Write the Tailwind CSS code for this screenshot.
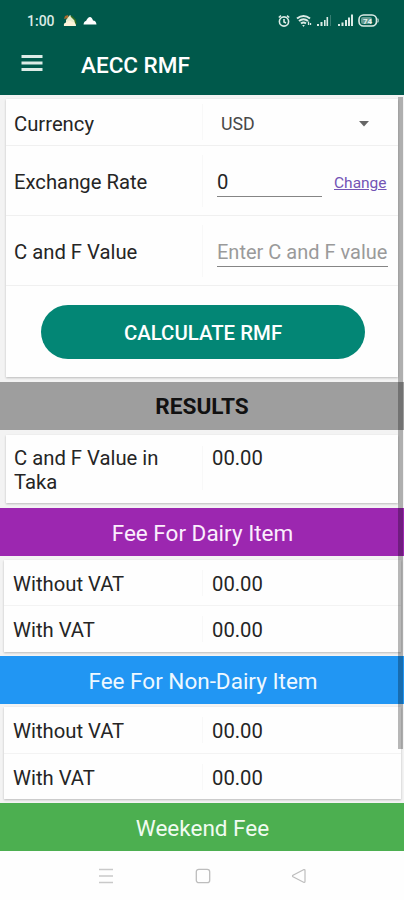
<!DOCTYPE html>
<html lang="en">
<head>
<meta charset="utf-8">
<title>AECC RMF</title>
<script src="https://cdn.jsdelivr.net/npm/@tailwindcss/browser@4"></script>
</head>
<body class="w-[404px] h-[900px] overflow-hidden bg-[#f3f3f3] font-[Roboto,sans-serif] text-[#252525] text-[20.250px] leading-[24px] whitespace-nowrap">
<div class="relative w-[404px] h-[900px] flex flex-col overflow-hidden">
  <header class="h-[95px] shrink-0 bg-[#00594b] text-white">
    <div class="h-[41px] flex items-center pl-[27px] pr-[25px] text-[#dcebe6]">
      <span class="text-[14px] font-medium w-[36px]">1:00</span>
      <svg class="w-[14px] h-[14px]" viewBox="0 0 14 14"><path d="M1 5L2 2L5 1L6 4Z" fill="#a66a2d"/><path d="M7 1L12 6V12H3V6Z" fill="#e8edce"/><path d="M8 2L12 6L13 10" stroke="#376d20" stroke-width="1.5" fill="none"/><path d="M1 12Q0 9 4 8Q7 5 9 8Q13 8 13 12Z" fill="#fff4da"/></svg>
      <svg class="w-[14px] h-[10px] ml-[6px]" viewBox="0 0 14 10"><path d="M.5 8.500Q1 5 3 5Q5 1 7 1Q9 1 10 4.500Q13 4.500 13.500 8.500Z" fill="#fff"/></svg>
      <div class="ml-auto flex items-center">
        <svg class="w-[12px] h-[14px]" viewBox="0 0 12 14" fill="none" stroke="currentColor" stroke-width="1.600"><circle cx="6" cy="7.500" r="4.600"/><path d="M.8 3.500L3 1.700M11.200 3.500L9 1.700M6 5V8L8 9"/></svg>
        <svg class="w-[16px] h-[14px] ml-[6px]" viewBox="0 0 16 14" fill="none" stroke="currentColor" stroke-width="2.100"><path d="M1 4.500Q7.500-.5 14 4.500M3 7Q7.500 3.500 12 7M5 9.500Q7.500 7.500 10 9.500"/><path d="M6.200 11H8.800L7.500 13Z" fill="currentColor" stroke="none"/><path d="M12.500 7.500V11M14.500 9V11" stroke-width="1.300"/></svg>
        <svg class="w-[15px] h-[13px] ml-[4px]" viewBox="0 0 15 13" fill="currentColor"><path d="M1 10h2v2H1zM4.500 8h2v4h-2zM8 6h1.600v6H8zM10.500 3h1.600v9h-1.600z"/><path d="M14 1h1v11h-1z" opacity=".25"/></svg>
        <svg class="w-[17px] h-[13px] ml-[6px]" viewBox="0 0 17 13" fill="currentColor"><path d="M1 10h2v2H1zM4.500 8.500h2V12h-2zM8 6h2v6H8zM11 3.500h2V12h-2zM14 .5h2V12h-2z"/></svg>
        <svg class="w-[21px] h-[13px] ml-[4px]" viewBox="0 0 21 13"><rect x="1" y="1" width="17.500" height="11" rx="4.500" fill="none" stroke="currentColor" stroke-width="1.600"/><rect x="3" y="3" width="11" height="7" rx="2" fill="currentColor" opacity=".45"/><path d="M19.800 4.500q1 2 0 4" stroke="currentColor" fill="none"/><text x="5" y="9.500" font-size="8" font-weight="700" fill="#e8f3ef">74</text></svg>
      </div>
    </div>
    <div class="h-[48px] flex items-center pl-[21px]">
      <svg class="w-[22px] h-[18px] -mt-[4px]" viewBox="0 0 22 18" fill="#dcebe6"><path d="M.5 1h21v3H.5zM.5 7.500h21v3H.5zM.5 14h21v3H.5z"/></svg>
      <h1 class="ml-[38px] -mt-px text-[22.500px] font-medium">AECC RMF</h1>
    </div>
  </header>

  <main class="flex flex-col shrink-0 h-[756px]">
    <section class="mt-[4px] ml-[6px] w-[392px] h-[278px] shrink-0 bg-[#fefefe] shadow-[0_1px_2px_#bbb]">
      <div class="h-[47px] flex items-center border-b border-[#f0f0f0] pl-[8px] pb-[1px] mr-0">
        <span class="w-[188px] mt-[4px]">Currency</span>
        <div class="h-[36px] border-l border-[#f8f8f8]"></div>
        <span class="ml-[18px] mt-[4px] text-[17.800px] text-[#484848]">USD</span>
        <svg class="ml-auto mr-[29px] mt-[4px] w-[10px] h-[6px]" viewBox="0 0 10 6"><path d="M0 0H10L5 5.500Z" fill="#666"/></svg>
      </div>
      <div class="h-[70px] flex items-center border-b border-[#f0f0f0] pl-[8px]">
        <span class="w-[188px] mt-[2px]">Exchange Rate</span>
        <div class="h-[52px] border-l border-[#f8f8f8]"></div>
        <span class="ml-[14px] w-[105px] h-[27px] mt-[5px] border-b border-[#858585]">0</span>
        <a class="ml-[12px] mt-[5px] text-[15.500px] text-[#7354b5] underline">Change</a>
      </div>
      <div class="h-[70px] flex items-center border-b border-[#f0f0f0] pl-[8px]">
        <span class="w-[188px] mt-[2px]">C and F Value</span>
        <div class="h-[52px] border-l border-[#f8f8f8]"></div>
        <span class="ml-[14px] w-[171px] h-[27px] mt-[5px] border-b border-[#858585] text-[20px] text-[#9a9a9a]">Enter C and F value</span>
      </div>
      <button class="mt-[19px] ml-[35px] block w-[324px] h-[54px] rounded-full bg-[#038675] text-white text-[20.400px] font-medium pt-[2px]">CALCULATE RMF</button>
    </section>

    <h2 class="mt-[5px] h-[48px] shrink-0 bg-[#9e9e9e] flex items-center justify-center text-[22.600px] font-bold text-[#111] pt-[2px]">RESULTS</h2>
    <section class="mt-[5px] ml-[6px] w-[392px] h-[68px] shrink-0 bg-[#fefefe] shadow-[0_1px_2px_#bbb] flex pt-[11px] pl-[8px]">
      <span class="w-[188px]">C and F Value in<br>Taka</span>
      <div class="h-[44px] border-l border-[#f8f8f8]"></div>
      <span class="ml-[9px]">00.00</span>
    </section>

    <h2 class="mt-[5px] h-[48px] shrink-0 bg-[#9c27b0] flex items-center justify-center text-[22.500px] text-[#fbeefd] pt-[2px] pl-px">Fee For Dairy Item</h2>
    <section class="mt-[4px] ml-[4px] w-[397px] h-[92px] shrink-0 bg-[#fefefe] shadow-[0_1px_2px_#bbb]">
      <div class="h-[46px] flex items-center border-b border-[#f3f3f3] pl-[9px]"><span class="w-[189px] mt-[2px]">Without VAT</span><div class="h-[26px] border-l border-[#f8f8f8]"></div><span class="ml-[9px] mt-[2px]">00.00</span></div>
      <div class="h-[46px] flex items-center pl-[9px]"><span class="w-[189px] mt-[2px]">With VAT</span><div class="h-[26px] border-l border-[#f8f8f8]"></div><span class="ml-[9px] mt-[2px]">00.00</span></div>
    </section>

    <h2 class="mt-[4px] h-[48px] shrink-0 bg-[#2196f3] flex items-center justify-center text-[22.500px] text-[#eef8ff] pt-[2px] pl-[2px]">Fee For Non-Dairy Item</h2>
    <section class="mt-[3px] ml-[4px] w-[397px] h-[92px] shrink-0 bg-[#fefefe] shadow-[0_1px_2px_#bbb]">
      <div class="h-[47px] flex items-center border-b border-[#f3f3f3] pl-[9px]"><span class="w-[189px] mt-[2px]">Without VAT</span><div class="h-[26px] border-l border-[#f8f8f8]"></div><span class="ml-[9px] mt-[2px]">00.00</span></div>
      <div class="h-[45px] flex items-center pl-[9px]"><span class="w-[189px] mt-[2px]">With VAT</span><div class="h-[26px] border-l border-[#f8f8f8]"></div><span class="ml-[9px] mt-[2px]">00.00</span></div>
    </section>
    <h2 class="mt-[4px] h-[48px] shrink-0 bg-[#4caf50] flex items-center justify-center text-[22.500px] text-[#f1fbf1] pt-[2px] pl-px">Weekend Fee</h2>
  </main>

  <nav class="flex-1 bg-[#fefefe] flex items-center pl-[98px]">
    <svg class="w-[16px] h-[16px]" viewBox="0 0 16 16" stroke="#c9c9c9" stroke-width="1.300"><path d="M1 1.500H15M1 8H15M1 14.500H15"/></svg>
    <svg class="w-[16px] h-[16px] ml-[81px]" viewBox="0 0 16 16"><rect x="1.300" y="1.300" width="13.400" height="13.400" rx="2.500" fill="none" stroke="#bdbdbd" stroke-width="1.300"/></svg>
    <svg class="w-[16px] h-[16px] ml-[80px]" viewBox="0 0 16 16"><path d="M13 1.500L2 7.200Q1 8 2 8.800L13 14.500Q14 14.500 14 13.500V2.500Q14 1.500 13 1.500Z" fill="none" stroke="#bdbdbd" stroke-width="1.200"/></svg>
  </nav>
  <div class="absolute left-[398px] top-[97px] w-[5px] h-[652px] bg-black/28"></div>
</div>
</body>
</html>
